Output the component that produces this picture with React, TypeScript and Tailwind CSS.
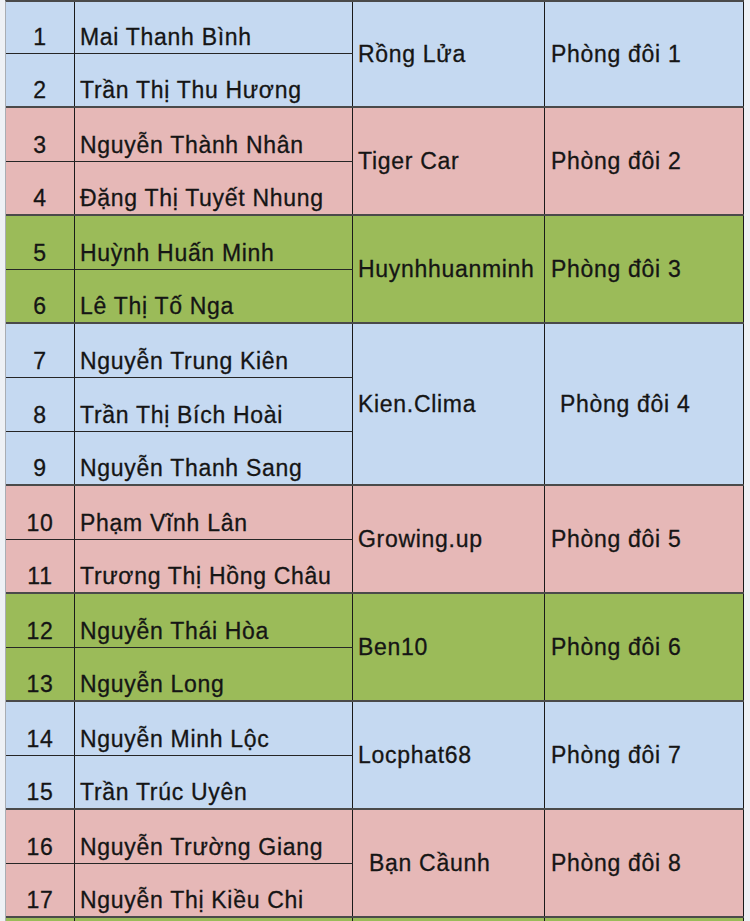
type Tone = 'blue' | 'pink' | 'green';

interface Group {
  tone: Tone;
  team: string;
  room: string;
  teamIndent?: boolean;
  roomIndent?: boolean;
  members: [string, string][];
}

const toneBg: Record<Tone, string> = {
  blue: 'bg-[#c5d9f1]',
  pink: 'bg-[#e6b8b7]',
  green: 'bg-[#9bbb59]',
};

const groups: Group[] = [
  { tone: 'blue', team: 'Rồng Lửa', room: 'Phòng đôi 1', members: [['1', 'Mai Thanh Bình'], ['2', 'Trần Thị Thu Hương']] },
  { tone: 'pink', team: 'Tiger Car', room: 'Phòng đôi 2', members: [['3', 'Nguyễn Thành Nhân'], ['4', 'Đặng Thị Tuyết Nhung']] },
  { tone: 'green', team: 'Huynhhuanminh', room: 'Phòng đôi 3', members: [['5', 'Huỳnh Huấn Minh'], ['6', 'Lê Thị Tố Nga']] },
  {
    tone: 'blue',
    team: 'Kien.Clima',
    room: 'Phòng đôi 4',
    roomIndent: true,
    members: [['7', 'Nguyễn Trung Kiên'], ['8', 'Trần Thị Bích Hoài'], ['9', 'Nguyễn Thanh Sang']],
  },
  { tone: 'pink', team: 'Growing.up', room: 'Phòng đôi 5', members: [['10', 'Phạm Vĩnh Lân'], ['11', 'Trương Thị Hồng Châu']] },
  { tone: 'green', team: 'Ben10', room: 'Phòng đôi 6', members: [['12', 'Nguyễn Thái Hòa'], ['13', 'Nguyễn Long']] },
  { tone: 'blue', team: 'Locphat68', room: 'Phòng đôi 7', members: [['14', 'Nguyễn Minh Lộc'], ['15', 'Trần Trúc Uyên']] },
  {
    tone: 'pink',
    team: 'Bạn Cầunh',
    room: 'Phòng đôi 8',
    teamIndent: true,
    members: [['16', 'Nguyễn Trường Giang'], ['17', 'Nguyễn Thị Kiều Chi']],
  },
  { tone: 'green', team: '', room: '', members: [['', '']] },
];

function GroupRows({ group, first }: { group: Group; first: boolean }) {
  const last = group.members.length - 1;
  return (
    <div className={`flex border-b-2 border-[#4a4a4a] ${toneBg[group.tone]}`}>
      <div className="flex flex-col">
        {group.members.map(([no, name], i) => {
          // the wrapper's top border eats 2px of the very first row
          const height = i === last || (first && i === 0) ? 'h-[52px]' : 'h-[54px]';
          const line = i === last ? '' : 'border-b border-[#262626]';
          return (
            <div key={no + name} className={`flex ${height} ${line}`}>
              <div className="flex w-[69px] items-end justify-center border-r border-[#1a1a1a] pb-[3px]">{no}</div>
              <div className="flex w-[278px] items-end border-r border-[#1a1a1a] pb-[3px] pl-[5px] whitespace-nowrap">
                {name}
              </div>
            </div>
          );
        })}
      </div>
      <div
        className={`flex w-[192px] items-center border-r border-[#1a1a1a] whitespace-nowrap ${
          group.teamIndent ? 'pl-[16px]' : 'pl-[5px]'
        }`}
      >
        {group.team}
      </div>
      <div
        className={`flex w-[199px] items-center border-r border-[#1a1a1a] whitespace-nowrap ${
          group.roomIndent ? 'pl-[15px]' : 'pl-[6px]'
        }`}
      >
        {group.room}
      </div>
    </div>
  );
}

export default function App() {
  return (
    <div className="h-[921px] w-[750px] overflow-hidden bg-[#eef1f5] font-['Liberation_Sans',Arial,sans-serif] text-[23px] leading-[26px] tracking-[0.7px] text-[#151515] [-webkit-text-stroke:0.3px_#151515]">
      <div className="ml-[5px] w-[739px] border-t-2 border-l border-[#4a4a4a] border-l-[#a9adb3]">
        {groups.map((g, i) => (
          <GroupRows key={i} group={g} first={i === 0} />
        ))}
      </div>
    </div>
  );
}
